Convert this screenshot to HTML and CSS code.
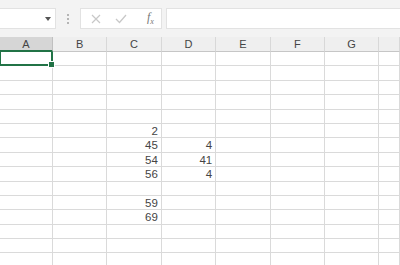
FILE: index.html
```html
<!DOCTYPE html>
<html lang="en">
<head>
    <meta charset="UTF-8">
    <title>Sheet</title>
    <link rel="stylesheet" href="styles.css">
</head>
<body>
    <div class="toolbar">
        <div class="name-box"><span class="caret"></span></div>
        <div class="grip"><i></i><i></i><i></i></div>
        <div class="fx-buttons">
            <svg class="btn" width="10" height="10" viewBox="0 0 10 10"><path d="M1 1 L9 9 M9 1 L1 9" stroke="#c8c8c8" stroke-width="1.2" fill="none"/></svg>
            <svg class="btn" width="12" height="10" viewBox="0 0 12 10"><path d="M1 5 L4.5 8.5 L11 1" stroke="#c8c8c8" stroke-width="1.3" fill="none"/></svg>
            <span class="fx">f<sub>x</sub></span>
        </div>
        <div class="formula"></div>
    </div>

    <div class="sheet">
        <div class="hdr selected">A</div>
        <div class="hdr">B</div>
        <div class="hdr">C</div>
        <div class="hdr">D</div>
        <div class="hdr">E</div>
        <div class="hdr">F</div>
        <div class="hdr">G</div>
        <div class="hdr"></div>
    </div>
    <div class="sheet cells" id="cells"></div>

    <script>
        // row -> [col C, col D]
        const data = {
            6: ['2', ''],
            7: ['45', '4'],
            8: ['54', '41'],
            9: ['56', '4'],
            11: ['59', ''],
            12: ['69', '']
        };
        const grid = document.getElementById('cells');
        for (let r = 1; r <= 15; r++) {
            for (let c = 0; c < 8; c++) {
                const cell = document.createElement('div');
                cell.className = 'cell';
                if (r === 1 && c === 0) cell.classList.add('active');
                if (data[r] && (c === 2 || c === 3)) cell.textContent = data[r][c - 2];
                grid.appendChild(cell);
            }
        }
    </script>
</body>
</html>
```

FILE: styles.css
```css
body {
    margin: 0;
    width: 400px;
    height: 265px;
    overflow: hidden;
    background: #fff;
    font-family: "Liberation Sans", Arial, sans-serif;
}
.toolbar {
    height: 37px;
    background: #f3f3f3;
    display: flex;
    align-items: flex-start;
    padding-top: 8px;
    box-sizing: border-box;
}
.name-box {
    width: 56px;
    height: 21px;
    background: #fff;
    border: 1px solid #e2e2e2;
    border-left: none;
    box-sizing: border-box;
    position: relative;
}
.caret {
    position: absolute;
    right: 4px;
    top: 8px;
    border-left: 3px solid transparent;
    border-right: 3px solid transparent;
    border-top: 4px solid #555;
}
.grip {
    width: 24px;
    height: 21px;
    display: flex;
    flex-direction: column;
    align-items: center;
    justify-content: center;
    gap: 2px;
}
.grip i {
    width: 2px;
    height: 2px;
    background: #b5b5b5;
}
.fx-buttons {
    width: 82px;
    height: 21px;
    background: #fff;
    border: 1px solid #e2e2e2;
    box-sizing: border-box;
    display: flex;
    align-items: center;
    padding-left: 10px;
    gap: 14px;
}
.fx {
    font-family: "Liberation Serif", serif;
    font-style: italic;
    font-size: 12px;
    color: #777;
    margin-left: 6px;
}
.fx sub {
    font-size: 8px;
}
.formula {
    flex: 1;
    height: 21px;
    margin-left: 4px;
    background: #fff;
    border: 1px solid #e2e2e2;
    border-right: none;
    box-sizing: border-box;
}
.sheet {
    width: 400px;
    overflow: hidden;
    display: grid;
    grid-template-columns: 53px repeat(6, 54.4px) 1fr;
}
.hdr {
    height: 15px;
    background: #efefef;
    border-right: 1px solid #d8d8d8;
    border-bottom: 1px solid #c6c6c6;
    box-sizing: border-box;
    font-size: 11px;
    line-height: 14px;
    text-align: center;
    color: #444;
}
.hdr.selected {
    background: #d6d6d6;
    border-bottom: 2px solid #217346;
    border-right-color: #c0c0c0;
}
.cells {
    grid-auto-rows: 14.4px;
    overflow: visible;
}
.cell {
    border-right: 1px solid #dadada;
    border-bottom: 1px solid #dadada;
    box-sizing: border-box;
    font-size: 11.5px;
    line-height: 15px;
    text-align: right;
    padding-right: 3px;
    color: #444;
    position: relative;
}
.cell.active {
    border: 2px solid #217346;
    border-top: none;
    border-left: 1px solid #217346;
}
.cell.active::after {
    content: "";
    position: absolute;
    right: -4px;
    bottom: -4px;
    width: 5px;
    height: 5px;
    background: #217346;
    border: 1px solid #fff;
    z-index: 2;
}
```
